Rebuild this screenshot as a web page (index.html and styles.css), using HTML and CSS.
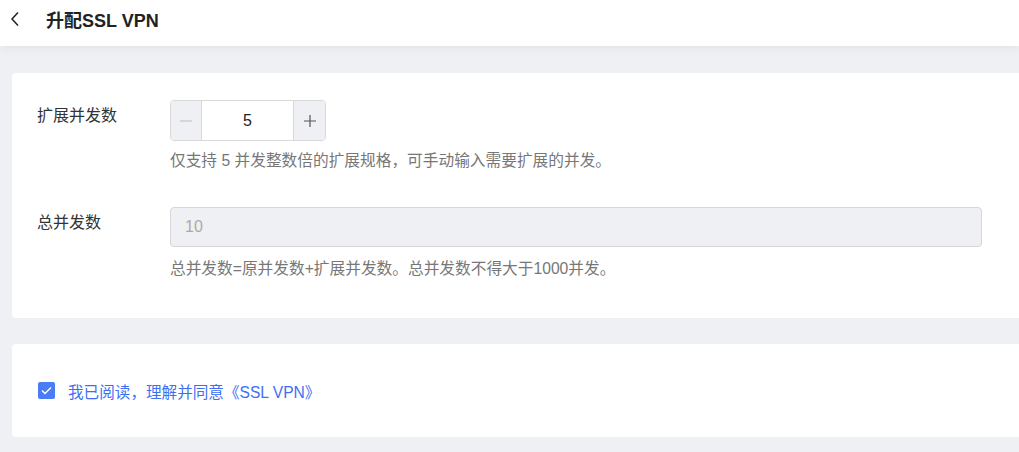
FILE: index.html
```html
<!DOCTYPE html>
<html lang="zh-CN">

<head>
    <meta charset="UTF-8">
    <meta name="viewport" content="width=device-width, initial-scale=1">
    <title>升配SSL VPN</title>
    <link rel="stylesheet" href="styles.css">
</head>

<body>
    <div class="header">
        <span class="back">
            <svg width="10" height="16" viewBox="0 0 10 16">
                <path d="M8 1.5 L2 8 L8 14.5" fill="none" stroke="#222" stroke-width="1.5" />
            </svg>
        </span>
        <h1 class="title">升配SSL VPN</h1>
    </div>

    <div class="main">
        <div class="card">
            <div class="form-row">
                <div class="form-label">扩展并发数</div>
                <div class="form-field">
                    <div class="stepper">
                        <button class="step-btn step-minus">
                            <svg width="12" height="12" viewBox="0 0 12 12">
                                <path d="M0 6 H12" stroke="#bbb" stroke-width="1.2" />
                            </svg>
                        </button>
                        <div class="step-value">5</div>
                        <button class="step-btn step-plus">
                            <svg width="12" height="12" viewBox="0 0 12 12">
                                <path d="M0 6 H12 M6 0 V12" stroke="#555" stroke-width="1.2" />
                            </svg>
                        </button>
                    </div>
                    <p class="hint">仅支持 5 并发整数倍的扩展规格，可手动输入需要扩展的并发。</p>
                </div>
            </div>
            <div class="form-row row-total">
                <div class="form-label">总并发数</div>
                <div class="form-field">
                    <div class="input-disabled">10</div>
                    <p class="hint">总并发数=原并发数+扩展并发数。总并发数不得大于1000并发。</p>
                </div>
            </div>
        </div>

        <div class="card card-agree">
            <label class="agree">
                <span class="checkbox">
                    <svg width="11" height="9" viewBox="0 0 11 9">
                        <path d="M1 4.5 L4 7.5 L10 1.5" fill="none" stroke="#fff" stroke-width="1.4" />
                    </svg>
                </span>
                <span class="agree-text">我已阅读，理解并同意《SSL VPN》</span>
            </label>
        </div>
    </div>
</body>

</html>
```

FILE: styles.css
```css
body,
html {
    margin: 0;
    height: 100%;
}

body {
    background: #eef0f3;
    font-family: "Liberation Sans", "Noto Sans CJK SC", sans-serif;
    font-size: 15px;
    color: #333;
    overflow: hidden;
}

.header {
    height: 46px;
    background: #fff;
    display: flex;
    align-items: center;
    box-shadow: 0 2px 10px rgba(0, 0, 0, 0.06);
    position: relative;
}

.back {
    width: 46px;
    padding-left: 10px;
    box-sizing: border-box;
    display: flex;
    align-items: center;
    margin-top: -9px;
}

.title {
    margin: 0;
    font-size: 18px;
    font-weight: bold;
    color: #222;
    margin-top: -8px;
}

.main {
    padding: 27px 0 0 12px;
}

.card {
    background: #fff;
    border-radius: 4px 0 0 4px;
    padding: 27px 0 38px 25px;
    margin-right: -20px;
}

.form-row {
    display: flex;
}

.row-total {
    margin-top: 35px;
}

.form-label {
    width: 133px;
    line-height: 31px;
    font-size: 16px;
    color: #333;
}

.form-field {
    flex: 1;
    padding-right: 57px;
}

.stepper {
    display: flex;
    width: 156px;
    height: 41px;
    border: 1px solid #d9d9d9;
    border-radius: 4px;
    box-sizing: border-box;
    overflow: hidden;
}

.step-btn {
    border: none;
    background: #eef0f3;
    padding: 0;
    display: flex;
    align-items: center;
    justify-content: center;
}

.step-minus {
    width: 31px;
    border-right: 1px solid #d9d9d9;
}

.step-plus {
    width: 32px;
    border-left: 1px solid #d9d9d9;
}

.step-value {
    flex: 1;
    display: flex;
    align-items: center;
    justify-content: center;
    font-size: 16px;
    color: #222;
}

.hint {
    margin: 9px 0 0;
    line-height: 22px;
    font-size: 15.7px;
    color: #777;
}

.input-disabled {
    height: 40px;
    box-sizing: border-box;
    border: 1px solid #d6d6d6;
    border-radius: 4px;
    background: #eff0f3;
    color: #aaa;
    padding-left: 14px;
    line-height: 38px;
    font-size: 16px;
}

.row-total .hint {
    margin-top: 11px;
}

.card-agree {
    margin-top: 26px;
    height: 93px;
    padding: 0 0 0 26px;
    display: flex;
    align-items: center;
    box-sizing: border-box;
}

.agree {
    display: flex;
    align-items: center;
}

.checkbox {
    width: 17px;
    height: 17px;
    border-radius: 2px;
    background: #4a7cf6;
    display: flex;
    align-items: center;
    justify-content: center;
    margin-right: 13px;
}

.agree-text {
    font-size: 15.6px;
    color: #3e6ff2;
}
```
